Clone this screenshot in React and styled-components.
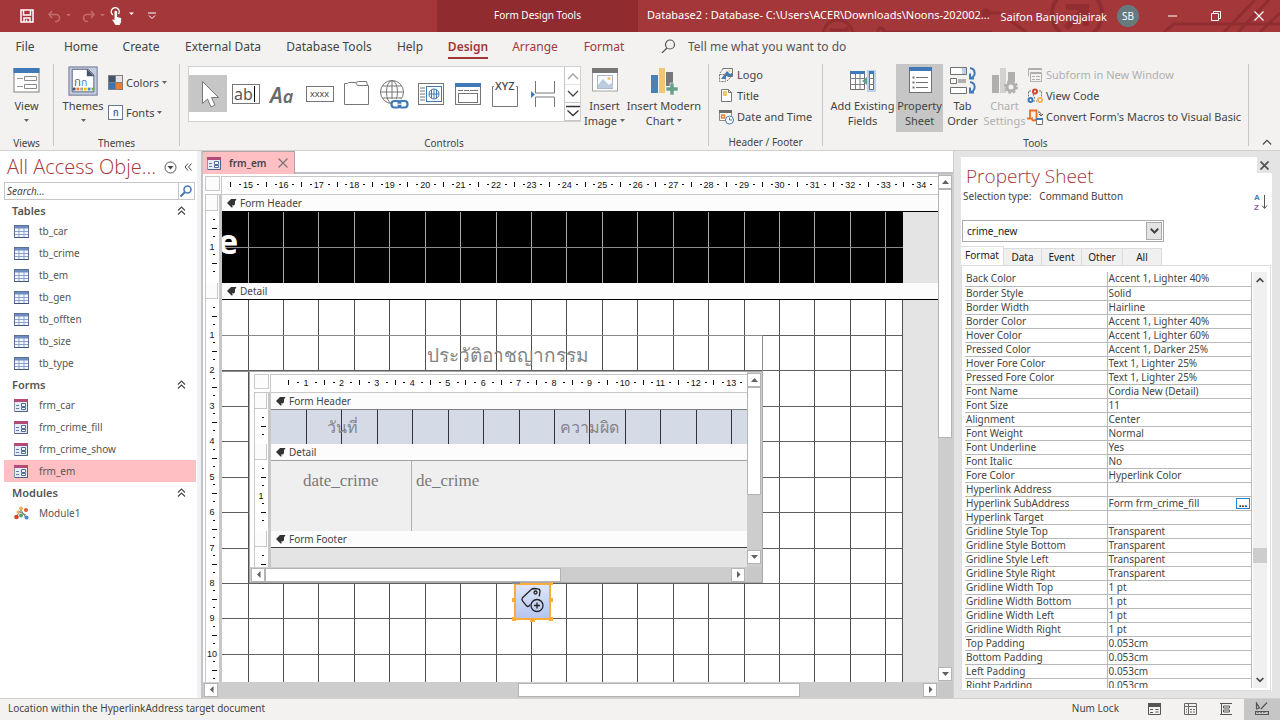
import React from 'react';
import styled, { createGlobalStyle } from 'styled-components';

const GlobalStyle = createGlobalStyle`
    * {
        box-sizing: border-box;
    }
    body {
        margin: 0;
        background: #e4e4e4;
        color: #444444;
        font-family: "Noto Sans", "Open Sans", sans-serif;
        font-size: 10px;
        overflow: hidden;
    }
    button, input, select {
        font: inherit;
        color: inherit;
        margin: 0;
        padding: 0;
        border: 0;
        background: none;
    }
    svg {
        display: block;
        flex: none;
    }
`

const Page = styled.div`
    display: flex;
    flex-direction: column;
    height: 100vh;
`

/* ---------- title bar ---------- */

const TitleBar = styled.header`
    position: relative;
    display: flex;
    flex: none;
    height: 32px;
    background: #a4373a;
    color: #ffffff;
    font-size: 11px;
`
const Circuit = styled.svg`
    position: absolute;
    right: 0;
    top: 0;
`
const QuickAccess = styled.div`
    display: flex;
    align-items: center;
    flex: 0 0 437px;
    padding-left: 20px;
`
const QuickButton = styled.button`
    display: flex;
    align-items: center;
    justify-content: center;
    width: ${p => p.$w}px;
    height: 24px;
    color: ${p => p.$dim ? '#c26b6d' : '#ffffff'};
`
const ToolContext = styled.div`
    display: flex;
    align-items: center;
    justify-content: center;
    flex: 0 0 201px;
    background: #902b2f;
    padding-bottom: 2px;
    font-size: 10px;
`
const DocTitle = styled.div`
    position: relative;
    flex: 1;
    min-width: 0;
    padding-left: 9px;
    line-height: 30px;
    white-space: nowrap;
`
const Account = styled.button`
    position: relative;
    display: flex;
    align-items: center;
    gap: 10px;
    margin-right: 12px;
`
const Avatar = styled.span`
    width: 22px;
    height: 22px;
    border-radius: 50%;
    background: #677a80;
    font-size: 10px;
    line-height: 22px;
`
const WindowButton = styled.button`
    position: relative;
    display: flex;
    align-items: center;
    justify-content: center;
    width: 43px;
`

/* ---------- ribbon ---------- */

const Tabs = styled.nav`
    display: flex;
    flex: none;
    height: 32px;
    background: #f3f2f1;
    font-size: 12px;
`
const Tab = styled.button`
    width: ${p => p.$w}px;
    height: 28px;
    color: ${p => p.$red ? '#a4373a' : '#444444'};
    font-weight: ${p => p.$active ? 600 : 400};
    white-space: nowrap;

    span {
        padding-bottom: 2px;
        border-bottom: ${p => p.$active ? '2px solid #a4373a' : '2px solid transparent'};
    }
`
const TellMe = styled.label`
    display: flex;
    align-items: center;
    height: 28px;
    padding-left: 25px;
    gap: 12px;

    input {
        width: 200px;
        outline: none;
    }
    input::placeholder {
        color: #555555;
        opacity: 1;
    }
`
const Ribbon = styled.div`
    display: flex;
    flex: none;
    height: 87px;
    background: #f3f2f1;
    border-bottom: 1px solid #d2d0ce;
    font-size: 11px;
    line-height: 15px;
`
const Group = styled.section`
    display: flex;
    flex-direction: column;
    flex: 0 0 ${p => p.$w}px;
    height: 82px;
    border-right: 1px solid #c8c6c4;
`
const GroupBody = styled.div`
    display: flex;
    flex: 1;
    padding-left: ${p => p.$pad || 0}px;
`
const GroupName = styled.div`
    height: 15px;
    font-size: 10px;
    line-height: 22px;
    text-align: center;
`
const BigButton = styled.button`
    display: flex;
    flex-direction: column;
    align-items: center;
    width: ${p => p.$w}px;
    height: 68px;
    padding-top: 2px;
    white-space: nowrap;
    color: ${p => p.disabled ? '#b1afad' : '#444444'};
    background: ${p => p.$active ? '#c6c6c6' : 'transparent'};

    > svg {
        margin-bottom: 4px;
        overflow: visible;
    }
`
const Line = styled.span`
    display: flex;
    align-items: center;
    gap: 3px;
    height: 15px;
`
const ButtonColumn = styled.div`
    display: flex;
    flex-direction: column;
    align-items: flex-start;
    gap: ${p => p.$gap || 0}px;
    padding-top: ${p => p.$top || 0}px;
`
const SmallButton = styled.button`
    display: flex;
    align-items: center;
    gap: 3px;
    height: 21px;
    white-space: nowrap;
    color: ${p => p.disabled ? '#b1afad' : '#444444'};
`
const Gallery = styled.div`
    display: flex;
    width: 393px;
    height: 56px;
    margin: 2px 0 0 8px;
    background: #ffffff;
    border: 1px solid #d2d0ce;
`
const GalleryItem = styled.button`
    display: flex;
    align-items: center;
    justify-content: center;
    width: ${p => p.$w || 37}px;
    height: 37px;
    margin-top: 8px;
    background: ${p => p.$active ? '#c6c6c6' : 'transparent'};
`
const GallerySteps = styled.div`
    display: flex;
    flex-direction: column;
    width: 16px;
    margin-left: auto;
    border-left: 1px solid #c6c6c6;
`
const GalleryStep = styled.button`
    display: flex;
    align-items: center;
    justify-content: center;
    flex: 1;
    border-bottom: 1px solid #c6c6c6;
    opacity: ${p => p.disabled ? 0.5 : 1};
`
const Collapse = styled.button`
    margin: auto 8px 4px auto;
`

/* ---------- workspace ---------- */

const Workspace = styled.div`
    display: flex;
    flex: 1;
    min-height: 0;
`
const NavPane = styled.aside`
    flex: 0 0 201px;
    background: #ffffff;
    border-right: 4px solid #f1f1f3;
    padding: 3px 0 0 4px;
`
const NavHead = styled.div`
    display: flex;
    align-items: center;
    height: 26px;
    gap: 7px;

    h1 {
        flex: 1;
        margin: 0;
        padding-left: 3px;
        color: #a4373a;
        font: 300 20px/26px "Open Sans", sans-serif;
        white-space: nowrap;
    }
    button:last-child {
        margin-right: 5px;
    }
`
const SearchBox = styled.div`
    display: flex;
    width: 191px;
    height: 18px;
    margin: 2px 0 2px 0;
    border: 1px solid #c6c6c6;

    input {
        flex: 1;
        min-width: 0;
        padding-left: 2px;
        font-style: italic;
    }
    input::placeholder {
        color: #444444;
        opacity: 1;
    }
    button {
        width: 16px;
        border-left: 1px solid #c6c6c6;
    }
`
const NavGroup = styled.button`
    display: flex;
    align-items: center;
    justify-content: space-between;
    width: 100%;
    height: 17px;
    padding: 0 11px 0 8px;
    color: #555555;
    font-size: 11px;
    font-weight: 600;
`
const NavList = styled.div`
    padding: 1px 1px 2px 0;
`
const NavItem = styled.a`
    display: flex;
    align-items: center;
    gap: 10px;
    height: 22px;
    padding-left: 10px;
    color: #555555;
    text-decoration: none;
    background: ${p => p.$active ? '#ffbfc3' : 'transparent'};
`

const Doc = styled.main`
    display: flex;
    flex-direction: column;
    flex: 1;
    min-width: 0;
    border-left: 2px solid #c4c4c8;
    background: #ffffff;
`
const DocTabs = styled.div`
    display: flex;
    flex: none;
    height: 23px;
    border-bottom: 2px solid #c0bfc6;
`
const DocTab = styled.div`
    display: flex;
    align-items: center;
    width: 92px;
    height: 23px;
    padding: 0 6px 0 4px;
    gap: 7px;
    font-weight: 600;
    background: #ffbfc3;
    border: 1px solid #b5a2a6;
    border-width: 1px 1px 0 0;

    button {
        margin-left: auto;
    }
`
const Designer = styled.div`
    display: grid;
    grid-template-columns: minmax(0, 1fr) 15px;
    grid-template-rows: minmax(0, 1fr) 16px;
    flex: 1;
    min-height: 0;
    background: #c8c8c8;
`
const Surface = styled.div`
    display: flex;
    flex-direction: column;
    overflow: hidden;
    padding: 2px 0 0 ${p => p.$pad}px;
    background: #ffffff;
`
const RulerRow = styled.div`
    display: flex;
    flex: none;
    height: 18px;
`
const Corner = styled.div`
    width: 15px;
    height: 15px;
    margin-right: 1px;
    border: 1px solid #c8c8c8;
    background: #fcfcfc;
`
const HStrip = styled.div`
    flex: 1;
    min-width: 0;
    overflow: hidden;
    border: solid #c8c8c8;
    border-width: 1px 0 0 1px;
`
const Section = styled.section`
    display: flex;
    flex: ${p => p.$grow ? '1' : 'none'};
    min-height: 0;
`
const VStrip = styled.div`
    display: flex;
    flex-direction: column;
    width: 15px;
    overflow: hidden;
    border: solid #c8c8c8;
    border-width: ${p => p.$first ? '1px 1px 0 1px' : '0 1px'};

    i {
        flex: none;
        width: 12px;
        height: 16px;
        border: solid #c8c8c8;
        border-width: 0 1px 1px 0;
        background: #fcfcfc;
    }
    svg {
        flex: 1 1 0;
        min-height: 0;
    }
`
const SectionMain = styled.div`
    display: flex;
    flex-direction: column;
    flex: 1;
    min-width: 0;
    border-left: 2px solid #c8c8c8;
`
const SectionBar = styled.button`
    display: flex;
    align-items: center;
    flex: none;
    gap: 3px;
    height: ${p => p.$first ? 18 : 17}px;
    padding-left: 5px;
    background: #fcfcfc;
    border-top: ${p => p.$first ? '1px solid #c8c8c8' : '0'};
    border-bottom: 1px solid ${p => p.$line || '#000000'};
`
const SectionBody = styled.div`
    position: relative;
    isolation: isolate;
    flex: ${p => p.$h ? '0 0 ' + p.$h + 'px' : '1'};
    min-height: 0;
    overflow: hidden;
    background: ${p => p.$bg || '#e4e4e4'};
`

/* Controls sit where the form's author dropped them on the canvas. */
const Placed = styled.div`
    position: absolute;
    left: ${p => p.$x}px;
    top: ${p => p.$y}px;
    white-space: nowrap;
`
const Backdrop = styled(Placed)`
    z-index: -1;
    width: 681px;
    height: 100%;
    background: ${p => p.$bg};
`
const BigLetter = styled(Placed)`
    color: #ffffff;
    font-size: 34px;
    font-weight: 700;
    line-height: 34px;
`
const Heading = styled(Placed)`
    width: 541px;
    height: 37px;
    border: 1px solid #8a8a8a;
    border-left: 0;
    color: #858585;
    font-size: 19px;
    line-height: 38px;
    padding-left: 205px;
`
const Caption = styled(Placed)`
    color: #858585;
    font-size: 16px;
    line-height: 34px;
`
const Field = styled(Placed)`
    width: ${p => p.$w}px;
    height: 70px;
    padding-left: ${p => p.$inset}px;
    border-right: 1px solid #b0b0b0;
    color: #7a7a7a;
    font: 17px/40px "Liberation Serif", serif;
`
const Subform = styled(Placed)`
    display: grid;
    grid-template-columns: minmax(0, 1fr) 15px;
    grid-template-rows: minmax(0, 1fr) 15px;
    width: 514px;
    height: 212px;
    border: 1px solid #a8a8a8;
    background: #c8c8c8;
`
const CommandButton = styled.button`
    position: absolute;
    left: 290px;
    top: 282px;
`

const HBar = styled.div`
    display: flex;
    align-items: center;
    padding: 1px ${p => p.$end}px 1px 1px;
    background: #cdcdcd;
`
const VBar = styled.div`
    display: flex;
    flex-direction: column;
    padding: 1px 0 ${p => p.$end || 1}px 0;
    background: #cdcdcd;
`
const Arrow = styled.button`
    display: flex;
    align-items: center;
    justify-content: center;
    flex: none;
    width: 14px;
    height: 14px;
    background: #ffffff;
    border: 1px solid #b4b4b4;
`
const Thumb = styled.div`
    flex: ${p => p.$size} 1 0;
    height: ${p => p.$across ? '14px' : 'auto'};
    width: ${p => p.$across ? 'auto' : '14px'};
    background: #ffffff;
    border: 1px solid #b4b4b4;
`
const Gap = styled.div`
    flex: ${p => p.$size} 1 0;
`

/* ---------- property sheet ---------- */

const PropPane = styled.aside`
    position: relative;
    flex: 0 0 327px;
    padding: 6px 8px 7px 7px;
    border-left: 1px solid #d0d0d0;
    background: #e4e4e4;
`
const PaneClose = styled.button`
    position: absolute;
    top: 6px;
    right: 0;
    display: flex;
    align-items: center;
    justify-content: center;
    width: 23px;
    height: 16px;
    padding-right: 8px;
    background: #e4e4e4;
`
const Sheet = styled.div`
    display: flex;
    flex-direction: column;
    height: 100%;
    background: #ffffff;
`
const SheetHead = styled.div`
    display: flex;
    justify-content: space-between;
    height: 63px;
    padding: 7px 3px 0 2px;

    h2 {
        margin: 0;
        padding-left: 3px;
        color: #a4373a;
        font: 300 19px/25px "Open Sans", sans-serif;
    }
    p {
        display: flex;
        gap: 8px;
        margin: 0;
        line-height: 14px;
    }
    button {
        margin-top: 28px;
        height: 20px;
    }
`
const Picker = styled.div`
    position: relative;
    width: 202px;
    margin-left: 1px;

    select {
        appearance: none;
        width: 100%;
        height: 22px;
        padding-left: 4px;
        border: 1px solid #ababab;
        background: #ffffff;
        color: #222222;
    }
    span {
        position: absolute;
        top: 2px;
        right: 2px;
        display: flex;
        align-items: center;
        justify-content: center;
        width: 16px;
        height: 18px;
        border: 1px solid #ababab;
        background: #e4e4e4;
        pointer-events: none;
    }
`
const SheetTabs = styled.div`
    display: flex;
    align-items: flex-end;
    height: 23px;
`
const SheetTab = styled.button`
    width: ${p => p.$w}px;
    height: ${p => p.$active ? 20 : 17}px;
    margin-bottom: ${p => p.$active ? -1 : 0}px;
    padding-bottom: ${p => p.$active ? 3 : 0}px;
    color: #222222;
    background: ${p => p.$active ? '#ffffff' : '#f0f0f0'};
    border: 1px solid #dcdcdc;
    border-width: 1px 1px 0 0;
`
const SheetBody = styled.div`
    display: flex;
    flex: 1;
    min-height: 0;
    margin-right: 1px;
    padding: 6px 3px 2px 3px;
    border: 1px solid #dcdcdc;
`
const TableWrap = styled.div`
    flex: 1;
    overflow: hidden;
`
const PropTable = styled.table`
    width: 100%;
    border-collapse: collapse;
    table-layout: fixed;
    line-height: 13px;

    th, td {
        height: 14px;
        padding: 0 0 0 1px;
        border-bottom: 1px solid #b8b8b8;
        font-weight: 400;
        text-align: left;
        white-space: nowrap;
    }
    th {
        width: 142px;
    }
    td {
        border-left: 1px solid #b8b8b8;
        border-right: 1px solid #b8b8b8;
    }
    td div {
        display: flex;
        align-items: center;
        justify-content: space-between;
        height: 13px;
    }
`
const Builder = styled.button`
    width: 14px;
    height: 11px;
    margin-right: 1px;
    border: 1px solid #1f83d6;
    color: #000000;
    font-size: 10px;
    font-weight: 700;
    line-height: 4px;
`
const SheetScroll = styled.div`
    display: flex;
    flex-direction: column;
    align-items: center;
    width: 14px;
    margin-left: 1px;
    background: #f0f0f0;

    i {
        width: 14px;
        height: 15px;
        background: #cdcdcd;
    }
    button {
        display: flex;
        align-items: center;
        justify-content: center;
        height: 16px;
    }
`

/* ---------- status bar ---------- */

const StatusBar = styled.footer`
    display: flex;
    align-items: stretch;
    flex: none;
    height: 22px;
    padding-left: 8px;
    background: #f3f2f1;
    border-top: 1px solid #d2d0ce;
    line-height: 18px;

    p {
        flex: 1;
        margin: 0;
    }
    span {
        margin-right: 17px;
    }
`
const ViewButton = styled.button`
    display: flex;
    align-items: center;
    justify-content: center;
    width: 36px;
    padding-bottom: 2px;
    background: ${p => p.$active ? '#c6c6c6' : 'transparent'};
`

/* ---------- small drawings ---------- */

const Caret = ({ color = '#666666' }) => (
    <svg width="5" height="3" viewBox="0 0 5 3"><path d="M0 0h5L2.5 3z" fill={color} /></svg>
)
const Chevron = ({ up, w = 12, color = '#444444', bold }) => (
    <svg width={w} height="8" viewBox="0 0 12 8" fill="none" stroke={color} strokeWidth={bold ? 2.6 : 1.3}>
        <path d={up ? 'M1 7l5-5 5 5' : 'M1 1l5 5 5-5'} />
    </svg>
)
const Cross = ({ size = 10, color, w = 1.2 }) => (
    <svg width={size} height={size} viewBox="0 0 10 10" stroke={color} strokeWidth={w}>
        <path d="M.5.5l9 9M9.500 .5l-9 9" />
    </svg>
)
const arrowPaths = { up: 'M0 6l3.500-4L7 6z', down: 'M0 2l3.500 4L7 2z', left: 'M5.500 0v7L2 3.500z', right: 'M2 0v7l3.500-3.500z' }
const ArrowGlyph = ({ dir }) => (
    <svg width="7" height="8" viewBox="0 0 7 8"><path d={arrowPaths[dir]} fill="#606060" /></svg>
)
const DoubleUp = () => (
    <svg width="9" height="9" viewBox="0 0 9 9" fill="none" stroke="#444444" strokeWidth="1.1">
        <path d="M1 4.500L4.500 1 8 4.500M1 8.500L4.500 5 8 8.500" />
    </svg>
)
const SectionArrow = () => (
    <svg width="10" height="10" viewBox="0 0 10 10">
        <path d="M0 5L4 1h5.500L8 3.500V6L6.500 8.500V7H5.500v2.500H4.500z" fill="#333333" />
    </svg>
)
const TableIcon = () => (
    <svg width="15" height="13" viewBox="0 0 15 13">
        <rect x=".5" y=".5" width="14" height="12" fill="#f4f8fd" stroke="#5a7199" />
        <path d="M1 1h13v2.500H1z" fill="#6d8cc0" />
        <path d="M1 6.500h13M1 9.500h13M5 3v9.500M10 3v9.500" stroke="#8ba3c9" />
        <path d="M.5 12.500h14" stroke="#3f5478" />
    </svg>
)
const FormIcon = () => (
    <svg width="15" height="13" viewBox="0 0 15 13">
        <rect x=".5" y=".5" width="13" height="12" fill="#e6edf7" stroke="#8295b5" />
        <path d="M0 0h14v3H0z" fill="#b34a78" />
        <path d="M2 6.500h3M2 9.500h3" stroke="#6580a8" />
        <path d="M7.500 4.500h4v3h-4zM7.500 8.500h4v2h-4z" fill="#ffffff" stroke="#4e6c9c" />
        <path d="M13.500 3v9.500H1" stroke="#4f6184" fill="none" />
    </svg>
)
const ModuleIcon = () => (
    <svg width="15" height="14" viewBox="0 0 15 14">
        <path d="M2 11l5-7 5 8M4 5l8 4" stroke="#777777" fill="none" />
        <circle cx="7" cy="2.500" r="2" fill="#e8b45c" />
        <circle cx="12" cy="4" r="2" fill="#d9582f" />
        <circle cx="2.500" cy="11" r="2.300" fill="#cf4a31" />
        <circle cx="7" cy="9.500" r="2" fill="#57a05b" />
        <circle cx="12.500" cy="11.500" r="2" fill="#4a86d0" />
        <circle cx="4" cy="6" r="1.500" fill="#e8b45c" />
    </svg>
)

const CircuitArt = () => (
    <Circuit width="460" height="32" viewBox="0 0 460 32" fill="none" stroke="#8f2d31" strokeWidth="3">
        <circle cx="18" cy="35" r="15" />
        <path d="M10 30h16M12 35h12" />
        <path d="M28 31l-2-4M62 32h110M156 13h24l26 19" />
        <circle cx="61" cy="31" r="3" />
        <circle cx="166" cy="13" r="3" />
        <circle cx="257" cy="14" r="25" strokeWidth="4" />
        <path d="M246 28l18-18M246 7h20v19" strokeWidth="6" />
        <path d="M344 32l10-8h106M404 32l31-32M418 32l31-32M440 32l20-19" />
    </Circuit>
)

/* ribbon icons */
const ViewIcon = () => (
    <svg width="28" height="28" viewBox="0 0 28 28">
        <rect x="1" y="3" width="25" height="23" fill="#ffffff" stroke="#808080" />
        <path d="M.5 2h26v5h-26z" fill="#3f79b8" />
        <path d="M4 12.500h6M4 20.500h6" stroke="#9a9a9a" />
        <path d="M11.500 10.500h12v4h-12zM11.500 18.500h12v4h-12z" fill="#ffffff" stroke="#8a8a8a" />
    </svg>
)
const ThemesIcon = () => (
    <svg width="30" height="28" viewBox="0 0 30 28">
        <g transform="scale(.94)">
            <rect x="1" y="1" width="30" height="30" fill="#c3cbdc" stroke="#66738f" />
            <path d="M4.500 3.500h17l6 6v18h-23z" fill="#ffffff" stroke="#4f5f80" />
            <path d="M20 3v8h8z" fill="#44546a" />
            <text x="6" y="21" fontSize="12" fill="#44546a">ก</text>
            <text x="14" y="21" fontSize="11" fill="#3f79b8">ก</text>
            {['#44546a', '#ed7d31', '#a5a5a5', '#ffc000', '#4a86d0', '#70ad47'].map((c, i) => (
                <rect key={c} x={5 + i * 4} y="23" width="3" height="3" fill={c} />
            ))}
        </g>
    </svg>
)
const ColorsIcon = () => (
    <svg width="15" height="15" viewBox="0 0 15 15">
        <path d="M0 0h15v15H0z" fill="#7f7f7f" />
        <path d="M1 1h6v6H1z" fill="#44546a" />
        <path d="M8 1h6v6H8z" fill="#e3e3e3" />
        <path d="M1 8h6v6H1z" fill="#3c74b8" />
        <path d="M8 8h6v6H8z" fill="#f07b24" />
    </svg>
)
const FontsIcon = () => (
    <svg width="15" height="15" viewBox="0 0 15 15">
        <rect x=".5" y=".5" width="14" height="14" fill="#ffffff" stroke="#66788f" />
        <text x="5" y="11" fontSize="9" fontWeight="600" fill="#3f5f95">ก</text>
    </svg>
)
const Frame = ({ children, w = 28, h = 28 }) => (
    <svg width={w} height={h} viewBox={'0 0 ' + w + ' ' + h} fill="none" stroke="#767676">{children}</svg>
)
const galleryIcons = [
    ['Select', <Frame><path d="M8.500 1.500v22l5-4.500 3.500 8 4-2-3.500-7.500h7z" fill="#ffffff" /></Frame>],
    ['Text Box', <Frame><rect x=".5" y="4.500" width="27" height="19" fill="#ffffff" /><text x="2" y="20" fontSize="16" fill="#555555" stroke="none">ab</text><path d="M22.500 6v16" stroke="#000000" /></Frame>],
    ['Label', <Frame><text x="1" y="23" fontSize="21" fontStyle="italic" fontWeight="600" fill="#6a6a6a" stroke="none">A<tspan fontSize="18">a</tspan></text></Frame>],
    ['Button', <Frame><rect x=".5" y="6.500" width="27" height="15" fill="#ffffff" /><text x="4" y="17" fontSize="9" fill="#444444" stroke="none">xxxx</text></Frame>],
    ['Tab Control', <Frame><path d="M1.500 24.500v-21h3l1-1h7l2 3h11v19z" fill="#ffffff" /><path d="M12.500 2.500l3-1h8l1 4" /></Frame>],
    ['Link', (
        <Frame w={30} h={30}>
            <circle cx="13" cy="13" r="11.500" />
            <ellipse cx="13" cy="13" rx="5.500" ry="11.500" />
            <path d="M13 1v24M1.500 13h23M3.500 7h19M3.500 19h19" />
            <path d="M12 20h18v10H12z" fill="#ffffff" stroke="none" />
            <g stroke="#3f79b8" strokeWidth="2.200">
                <rect x="12.500" y="22" width="9" height="6.500" rx="3" />
                <rect x="19.500" y="22" width="9" height="6.500" rx="3" />
            </g>
            <path d="M17 25.200h7" stroke="#ffffff" strokeWidth="1" />
        </Frame>
    )],
    ['Web Browser Control', <Frame><rect x="1.500" y="3.500" width="25" height="21" fill="#ffffff" /><path d="M3 8h5M3 11h5M3 14h5M3 17h5M3 20h5" /><rect x="9.500" y="6.500" width="15" height="15" stroke="#3f79b8" /><circle cx="17" cy="14" r="5" stroke="#3f79b8" /><path d="M17 9v10M12 14h10M14.500 10v8M19.500 10v8" stroke="#3f79b8" /></Frame>],
    ['Navigation Control', <Frame><rect x="1.500" y="3.500" width="25" height="21" fill="#ffffff" /><path d="M1 3h26v4H1z" fill="#3f79b8" stroke="none" /><path d="M4 10.500h5M10 10.500h5M16 10.500h8" /><rect x="4.500" y="13.500" width="19" height="9" /></Frame>],
    ['Option Group', <Frame><path d="M3 6.500H1.500v20h25v-20H25" fill="#ffffff" /><text x="4" y="10" fontSize="11" fontWeight="500" fill="#444444" stroke="none">XYZ</text></Frame>],
    ['Insert Page Break', <Frame><path d="M7.500 1v12h19V1M7.500 27V17h19v10" /><path d="M3 11l4 3.500L3 18z" fill="#3f79b8" stroke="none" /></Frame>],
]
const InsertImageIcon = () => (
    <svg width="28" height="28" viewBox="0 0 28 28">
        <rect x="1.500" y="3" width="25" height="22" fill="#ffffff" stroke="#a3a3a3" />
        <path d="M1 2h26v5H1z" fill="#767676" />
        <rect x="6.500" y="9.500" width="15" height="13" fill="#f7f9fc" stroke="#a9b6c6" />
        <path d="M7 22v-3l5-6 6 6 2-2 2 2v3z" fill="#bccbdd" />
        <circle cx="18" cy="12.500" r="1.500" fill="#edc36f" />
    </svg>
)
const ChartIcon = () => (
    <svg width="28" height="28" viewBox="0 0 28 28">
        <path d="M1 9h7v18H1z" fill="#4a80b8" />
        <path d="M9 2h6v25H9z" fill="#f0c674" />
        <path d="M16 6h7v14h-7z" fill="#777777" />
        <path d="M20 17h4v4h4v4h-4v4h-4v-4h-4v-4h4z" fill="#65a08c" stroke="#f3f2f1" strokeWidth=".6" />
    </svg>
)
const LogoIcon = () => (
    <svg width="16" height="16" viewBox="0 0 16 16" fill="none">
        <path d="M4.500 1.500h10v8h-5" stroke="#777777" /><path d="M3 12l3-4h2v4z" fill="#3f79b8" />
        <path d="M6 8l3-4 3 3 2-1v3H6z" fill="#3f79b8" /><circle cx="11.500" cy="4" r="1" fill="#edc36f" />
        <path d="M1.500 7.500h6v7h-6zM2 6l3-4M9 14l4-4" stroke="#777777" strokeDasharray="2 1" />
    </svg>
)
const TitleIcon = () => (
    <svg width="16" height="16" viewBox="0 0 16 16">
        <path d="M3.500 1.500h7l3 3v9h-10z" fill="#ffffff" stroke="#777777" />
        <path d="M10.500 1.500v3h3" stroke="#777777" fill="none" /><path d="M5 3h4v5H5z" fill="#f0c674" />
    </svg>
)
const DateIcon = () => (
    <svg width="16" height="16" viewBox="0 0 16 16" fill="none">
        <path d="M1.500 2.500h12v9h-12z" fill="#ffffff" stroke="#8a8a8a" /><path d="M1 1h13v3H1z" fill="#6c6c6c" />
        <path d="M3.500 6h3v3h-3z" stroke="#ed7d31" strokeWidth="1.500" />
        <circle cx="11.500" cy="11" r="4" fill="#ffffff" stroke="#3f79b8" /><path d="M11.500 8.500V11H14" stroke="#3f79b8" />
    </svg>
)
const FieldsIcon = () => (
    <svg width="28" height="28" viewBox="0 0 28 28" fill="none">
        <path d="M18 4h9v22h-9z" fill="#bcd2ea" />
        <path d="M1.500 6.500h14v17h-14zM20.500 6.500h4v17h-4z" fill="#ffffff" stroke="#707070" />
        <path d="M1 5h15v3H1zM20 5h5v3h-5z" fill="#3f79b8" />
        <path d="M1 12.500h14M1 18.500h14M6.500 8v15M11 8v15M20 12.500h5M20 18.500h5" stroke="#808080" />
        <path d="M13 15l5-4v8z" fill="#65a08c" />
    </svg>
)
const SheetIcon = () => (
    <svg width="28" height="28" viewBox="0 0 28 28" fill="none" stroke="#707070">
        <rect x="3.500" y="2.500" width="22" height="24" fill="#ffffff" />
        <path d="M3 1h23v4H3z" fill="#3f79b8" stroke="none" />
        <path d="M10 11.500h12M10 16.500h12M10 21.500h12" /><path d="M6.500 11.500h2M6.500 16.500h2M6.500 21.500h2" strokeWidth="2" />
    </svg>
)
const OrderIcon = () => (
    <svg width="28" height="28" viewBox="0 0 28 28" fill="none" stroke="#707070">
        <path d="M1.500 1.500h16v7h-16zM1.500 12.500h6v5h-6zM1.500 21.500h16v6h-16z" fill="#ffffff" />
        <path d="M13 2h4v6h-4z" fill="#bcd2ea" stroke="none" /><path d="M9 13h8v4H9z" fill="#b0b0b0" stroke="none" />
        <path d="M21 2c6 1 6 8 1 10M25 12.500h-4V7.500M21 16c6 1 6 8 1 10M25 26.500h-4v-5" stroke="#3f79b8" strokeWidth="2" />
    </svg>
)
const ChartSettingsIcon = () => (
    <svg width="28" height="28" viewBox="0 0 28 28">
        <path d="M1 9h7v18H1zM17 6h7v10h-7z" fill="#b1afad" /><path d="M9 2h6v25H9z" fill="#d4d2d0" />
        <circle cx="20" cy="21" r="4" fill="#f3f2f1" stroke="#b1afad" strokeWidth="3" />
        <circle cx="20" cy="21" r="6" fill="none" stroke="#b1afad" strokeWidth="2" strokeDasharray="2.400 2.310" />
    </svg>
)
const SubformIcon = () => (
    <svg width="16" height="16" viewBox="0 0 16 16" fill="none" stroke="#b1afad">
        <path d="M1.500 9.500v-8h13v2M1 2.500h13" /><path d="M3.500 5.500h11v9h-11zM3 6.500h12M5 9.500h3M9 9.500h4M5 12.500h3M9 12.500h4" />
    </svg>
)
const CodeIcon = () => (
    <svg width="16" height="16" viewBox="0 0 16 16" fill="none">
        <path d="M4 3H1.500v6M12 3h2.500v6M6 13h4M6 6l2 5" stroke="#777777" strokeDasharray="2 1" />
        <circle cx="8" cy="3.500" r="2" stroke="#c8492c" strokeWidth="2" fill="#ffffff" />
        <circle cx="3.500" cy="12" r="2" stroke="#3f79b8" strokeWidth="2" fill="#ffffff" />
        <circle cx="13" cy="12" r="2" stroke="#edb45c" strokeWidth="2" fill="#ffffff" />
    </svg>
)
const ConvertIcon = () => (
    <svg width="16" height="16" viewBox="0 0 16 16" fill="none">
        <path d="M3 9V1.500h6.500V9M0 9.500h5a2 2 0 0 0 4 0" stroke="#ed7024" strokeWidth="1.800" />
        <path d="M11 3c3 0 3 2 3 4M12 5l2 2 2-2" stroke="#555555" />
        <path d="M9.500 9.500h6v6h-6z" fill="#ffffff" stroke="#777777" /><path d="M9 9h7v2H9z" fill="#3f79b8" />
    </svg>
)

const UNIT = 35.43

function HRuler({ origin, first, count }) {
    const marks = []
    for (let i = 0; i < count; i++) {
        const x = origin + i * UNIT
        marks.push(
            <g key={i}>
                <rect x={Math.round(x - UNIT * 0.5)} y="5" width="1" height="5" />
                <rect x={Math.round(x - UNIT * 0.25)} y="7" width="2" height="1" />
                <rect x={Math.round(x + UNIT * 0.25)} y="7" width="2" height="1" />
                <text x={x} y="11" textAnchor="middle">{first + i}</text>
            </g>
        )
    }
    return (
        <svg width="100%" height="16" fontSize="9" fontFamily="Liberation Sans, sans-serif" fill="#111111">
            {marks}
        </svg>
    )
}

function VRuler({ count, last }) {
    const marks = []
    for (let i = 0; i < count; i++) {
        const y = i * UNIT
        marks.push(
            <g key={i}>
                <rect x="7" y={Math.round(y + 8)} width="2" height="1" />
                <rect x="6" y={Math.round(y + 17)} width="5" height="1" />
                <rect x="7" y={Math.round(y + 25)} width="2" height="1" />
                {(i < count - 1 || last) && <text x="6" y={Math.round(y + 39)} textAnchor="middle">{i + 1}</text>}
            </g>
        )
    }
    return (
        <svg width="13" height="1" fontSize="9" fontFamily="Liberation Sans, sans-serif" fill="#111111">
            {marks}
        </svg>
    )
}

function Grid({ width, height, offset = 0, color, cross, rows = 0, edge }) {
    const lines = []
    for (let x = offset; x < width; x += UNIT) {
        lines.push(<path key={'c' + x} d={`M${Math.floor(x) + 0.5} 0V${height}`} />)
    }
    for (let i = 1; i <= rows; i++) {
        lines.push(<path key={'r' + i} stroke={cross} d={`M0 ${Math.floor(i * UNIT) + 0.5}H${width}`} />)
    }
    return (
        <svg width={width} height={height} stroke={color} fill="none">
            {lines}
            {edge && <path d={`M${width - 0.5} 0V${height}`} />}
        </svg>
    )
}

function HScroll({ before, size, after, end = 1 }) {
    return (
        <HBar $end={end}>
            <Arrow aria-label="Scroll left"><ArrowGlyph dir="left" /></Arrow>
            {before > 0 && <Gap $size={before} />}
            <Thumb $across $size={size} />
            <Gap $size={after} />
            <Arrow aria-label="Scroll right"><ArrowGlyph dir="right" /></Arrow>
        </HBar>
    )
}

function VScroll({ size, after, end }) {
    return (
        <VBar $end={end}>
            <Arrow aria-label="Scroll up"><ArrowGlyph dir="up" /></Arrow>
            <Thumb $size={size} />
            <Gap $size={after} />
            <Arrow aria-label="Scroll down"><ArrowGlyph dir="down" /></Arrow>
        </VBar>
    )
}

function FormSection({ name, first, grow, h, bg, line, marks, lastMark, children }) {
    return (
        <Section $grow={grow}>
            <VStrip $first={first}>
                <i />
                <VRuler count={marks} last={lastMark} />
            </VStrip>
            <SectionMain>
                <SectionBar $first={first} $line={line}><SectionArrow />{name}</SectionBar>
                <SectionBody $h={h} $bg={bg}>{children}</SectionBody>
            </SectionMain>
        </Section>
    )
}

function CrimeSubform() {
    return (
        <Subform $x={27} $y={71}>
            <Surface $pad={4}>
                <RulerRow>
                    <Corner />
                    <HStrip><HRuler origin={35} first={1} count={13} /></HStrip>
                </RulerRow>
                <FormSection name="Form Header" first h={34} bg="#d5dbe6" line="#808080" marks={1}>
                    <Grid width={480} height={34} offset={UNIT} color="#30343c" />
                    <Caption $x={56} $y={0}>วันที่</Caption>
                    <Caption $x={289} $y={0}>ความผิด</Caption>
                </FormSection>
                <FormSection name="Detail" h={70} bg="#efefef" line="#a0a0a0" marks={2}>
                    <Field $x={0} $y={0} $w={141} $inset={32}>date_crime</Field>
                    <Field $x={141} $y={0} $w={400} $inset={4}>de_crime</Field>
                </FormSection>
                <FormSection name="Form Footer" grow line="#404040" marks={1} />
            </Surface>
            <VScroll size={108} after={56} end={3} />
            <HScroll before={0} size={295} after={170} end={2} />
        </Subform>
    )
}

function FormDesigner() {
    return (
        <Designer>
            <Surface $pad={2}>
                <RulerRow>
                    <Corner />
                    <HStrip><HRuler origin={26} first={15} count={20} /></HStrip>
                </RulerRow>
                <FormSection name="Form Header" first h={71} marks={2}>
                    <Backdrop $x={0} $y={0} $bg="#000000" />
                    <Grid width={681} height={71} offset={26} color="#a8a8a8" cross="#8a8a8a" rows={1} />
                    <BigLetter $x={-4} $y={12}>e</BigLetter>
                </FormSection>
                <FormSection name="Detail" grow marks={11}>
                    <Backdrop $x={0} $y={0} $bg="#ffffff" />
                    <Grid width={681} height={420} offset={26} color="#505050" cross="#606060" rows={10} edge />
                    <Heading $x={0} $y={35}>ประวัติอาชญากรรม</Heading>
                    <CrimeSubform />
                    <CommandButton aria-label="crime_new">
                        <svg width="42" height="40" viewBox="0 0 42 40" fill="none">
                            <defs>
                                <linearGradient id="face" x1="0" y1="0" x2="0" y2="1">
                                    <stop offset="0" stopColor="#dfe7f9" />
                                    <stop offset="1" stopColor="#b4c4f0" />
                                </linearGradient>
                            </defs>
                            <rect x="3" y="2" width="35" height="35" fill="url(#face)" stroke="#ffab3c" strokeWidth="2" />
                            <path d="M0 16h4v4H0zM37 16h4v4h-4zM0 35h4v4H0zM37 35h4v4h-4zM18 36h5v4h-5zM38 0h3v3h-3z" fill="#ffab3c" />
                            <path d="M-1 0h9v2h-9z" fill="#858b93" />
                            <path d="M18 22.500l-1 1.500c-1 .8-1.700.6-2.500-.2l-4-5c-.8-1-.8-2 0-3l8.500-8c1-1 2-1.300 3.500-1.300l3.500.3c1.500 0 2 1 2 2.500l-.8 5" stroke="#222222" strokeWidth="1.300" />
                            <circle cx="23.500" cy="10.500" r="1.500" stroke="#222222" strokeWidth="1.300" />
                            <circle cx="25" cy="23.500" r="6" stroke="#222222" strokeWidth="1.300" />
                            <path d="M25 20.500v6M22 23.500h6" stroke="#222222" strokeWidth="1.300" />
                        </svg>
                    </CommandButton>
                </FormSection>
            </Surface>
            <VScroll size={248} after={229} />
            <HScroll before={301} size={281} after={124} />
        </Designer>
    )
}

const tables = ['tb_car', 'tb_crime', 'tb_em', 'tb_gen', 'tb_offten', 'tb_size', 'tb_type']
const forms = ['frm_car', 'frm_crime_fill', 'frm_crime_show', 'frm_em']
const tabs = [
    ['File', 50], ['Home', 62], ['Create', 58], ['External Data', 106], ['Database Tools', 106], ['Help', 56],
    ['Design', 60], ['Arrange', 74], ['Format', 64],
]
const properties = [
    ['Back Color', 'Accent 1, Lighter 40%'],
    ['Border Style', 'Solid'],
    ['Border Width', 'Hairline'],
    ['Border Color', 'Accent 1, Lighter 40%'],
    ['Hover Color', 'Accent 1, Lighter 60%'],
    ['Pressed Color', 'Accent 1, Darker 25%'],
    ['Hover Fore Color', 'Text 1, Lighter 25%'],
    ['Pressed Fore Color', 'Text 1, Lighter 25%'],
    ['Font Name', 'Cordia New (Detail)'],
    ['Font Size', '11'],
    ['Alignment', 'Center'],
    ['Font Weight', 'Normal'],
    ['Font Underline', 'Yes'],
    ['Font Italic', 'No'],
    ['Fore Color', 'Hyperlink Color'],
    ['Hyperlink Address', ''],
    ['Hyperlink SubAddress', 'Form frm_crime_fill'],
    ['Hyperlink Target', ''],
    ['Gridline Style Top', 'Transparent'],
    ['Gridline Style Bottom', 'Transparent'],
    ['Gridline Style Left', 'Transparent'],
    ['Gridline Style Right', 'Transparent'],
    ['Gridline Width Top', '1 pt'],
    ['Gridline Width Bottom', '1 pt'],
    ['Gridline Width Left', '1 pt'],
    ['Gridline Width Right', '1 pt'],
    ['Top Padding', '0.053cm'],
    ['Bottom Padding', '0.053cm'],
    ['Left Padding', '0.053cm'],
    ['Right Padding', '0.053cm'],
]

function TopBar() {
    return (
        <TitleBar>
            <CircuitArt />
            <QuickAccess>
                <QuickButton $w={14} aria-label="Save">
                    <svg width="14" height="14" viewBox="0 0 14 14" fill="none" stroke="currentColor" strokeWidth="1.500">
                        <path d="M1 1h12v12H1zM3.500 1v5h7V1M4 13V9h6v4M6.500 10.500v2.500" />
                    </svg>
                </QuickButton>
                <QuickButton $w={50} $dim aria-label="Undo">
                    <svg width="24" height="14" viewBox="0 0 24 14" fill="none" stroke="currentColor" strokeWidth="1.600">
                        <path d="M5 2L2 5.500 5 9M2 5.500h7a3.500 3.500 0 0 1 0 7H8" />
                        <path d="M19 5h5l-2.500 2.500z" fill="currentColor" stroke="none" />
                    </svg>
                </QuickButton>
                <QuickButton $w={18} $dim aria-label="Redo">
                    <svg width="24" height="14" viewBox="0 0 24 14" fill="none" stroke="currentColor" strokeWidth="1.600">
                        <path d="M10 2l3 3.500L10 9M13 5.500H6a3.500 3.500 0 0 0 0 7h1" />
                        <path d="M19 5h5l-2.500 2.500z" fill="currentColor" stroke="none" />
                    </svg>
                </QuickButton>
                <QuickButton $w={40} aria-label="Touch mode">
                    <svg width="25" height="18" viewBox="0 0 25 18" fill="none" stroke="currentColor">
                        <path d="M3 8a4 4 0 1 1 5.500-1" strokeWidth="1.300" />
                        <path d="M4.500 5a1.300 1.300 0 0 1 2.600 0v5l4 1v4l-1.500 3H5.500L2 12.500l2.500.5z" fill="currentColor" stroke="none" />
                        <path d="M19 5.500h5L21.500 8z" fill="currentColor" stroke="none" />
                    </svg>
                </QuickButton>
                <QuickButton $w={20} aria-label="Customize quick access">
                    <svg width="8" height="8" viewBox="0 0 8 8" fill="none" stroke="currentColor">
                        <path d="M0 1h8M1 3.500l3 3 3-3" />
                    </svg>
                </QuickButton>
            </QuickAccess>
            <ToolContext>Form Design Tools</ToolContext>
            <DocTitle>Database2 : Database- C:\Users\ACER\Downloads\Noons-202002...</DocTitle>
            <Account>Saifon Banjongjairak<Avatar>SB</Avatar></Account>
            <WindowButton aria-label="Minimize">
                <svg width="9" height="2"><path d="M0 1h9" stroke="#ffffff" /></svg>
            </WindowButton>
            <WindowButton aria-label="Restore">
                <svg width="10" height="10" viewBox="0 0 10 10" fill="none" stroke="#ffffff">
                    <path d="M.5 2.500h7v7h-7zM2.500 2.500v-2h7v7h-2" />
                </svg>
            </WindowButton>
            <WindowButton aria-label="Close"><Cross color="#ffffff" size={10} /></WindowButton>
        </TitleBar>
    )
}

function RibbonTabs() {
    return (
        <Tabs>
            {tabs.map(([name, w], i) => (
                <Tab key={name} $w={w} $red={i > 5} $active={name === 'Design'}><span>{name}</span></Tab>
            ))}
            <TellMe>
                <svg width="15" height="14" viewBox="0 0 15 14" fill="none" stroke="#555555" strokeWidth="1.200">
                    <circle cx="9" cy="5.500" r="4.500" /><path d="M6 9l-5 5" />
                </svg>
                <input placeholder="Tell me what you want to do" aria-label="Tell me what you want to do" />
            </TellMe>
        </Tabs>
    )
}

function RibbonBar() {
    return (
        <Ribbon>
            <Group $w={54}>
                <GroupBody>
                    <BigButton $w={53}><ViewIcon /><Line>View</Line><Line><Caret /></Line></BigButton>
                </GroupBody>
                <GroupName>Views</GroupName>
            </Group>
            <Group $w={126}>
                <GroupBody $pad={4}>
                    <BigButton $w={50}><ThemesIcon /><Line>Themes</Line><Line><Caret /></Line></BigButton>
                    <ButtonColumn $gap={9} $top={8}>
                        <SmallButton><ColorsIcon />Colors <Caret /></SmallButton>
                        <SmallButton><FontsIcon />Fonts <Caret /></SmallButton>
                    </ButtonColumn>
                </GroupBody>
                <GroupName>Themes</GroupName>
            </Group>
            <Group $w={529}>
                <GroupBody>
                    <Gallery>
                        {galleryIcons.map(([name, icon], i) => (
                            <GalleryItem key={name} $active={i === 0} $w={i === 0 ? 38 : 37} aria-label={name}>{icon}</GalleryItem>
                        ))}
                        <GallerySteps>
                            <GalleryStep disabled aria-label="Previous row"><Chevron up /></GalleryStep>
                            <GalleryStep aria-label="Next row"><Chevron /></GalleryStep>
                            <GalleryStep aria-label="More controls">
                                <svg width="14" height="13" viewBox="0 0 14 13" fill="none" stroke="#333333">
                                    <path d="M0 1.500h14" strokeWidth="1.500" /><path d="M1.500 5.500l5.500 5 5.500-5" strokeWidth="1.300" />
                                </svg>
                            </GalleryStep>
                        </GallerySteps>
                    </Gallery>
                    <BigButton $w={47}><InsertImageIcon /><Line>Insert</Line><Line>Image <Caret /></Line></BigButton>
                    <BigButton $w={72}><ChartIcon /><Line>Insert Modern</Line><Line>Chart <Caret /></Line></BigButton>
                </GroupBody>
                <GroupName>Controls</GroupName>
            </Group>
            <Group $w={114}>
                <GroupBody $pad={9}>
                    <ButtonColumn>
                        <SmallButton><LogoIcon />Logo</SmallButton>
                        <SmallButton><TitleIcon />Title</SmallButton>
                        <SmallButton><DateIcon />Date and Time</SmallButton>
                    </ButtonColumn>
                </GroupBody>
                <GroupName>Header / Footer</GroupName>
            </Group>
            <Group $w={426}>
                <GroupBody $pad={6}>
                    <BigButton $w={67}><FieldsIcon /><Line>Add Existing</Line><Line>Fields</Line></BigButton>
                    <BigButton $w={47} $active><SheetIcon /><Line>Property</Line><Line>Sheet</Line></BigButton>
                    <BigButton $w={39}><OrderIcon /><Line>Tab</Line><Line>Order</Line></BigButton>
                    <BigButton $w={45} disabled><ChartSettingsIcon /><Line>Chart</Line><Line>Settings</Line></BigButton>
                    <ButtonColumn>
                        <SmallButton disabled><SubformIcon />Subform in New Window</SmallButton>
                        <SmallButton><CodeIcon />View Code</SmallButton>
                        <SmallButton><ConvertIcon />Convert Form's Macros to Visual Basic</SmallButton>
                    </ButtonColumn>
                </GroupBody>
                <GroupName>Tools</GroupName>
            </Group>
            <Collapse aria-label="Collapse the ribbon"><Chevron up w={10} /></Collapse>
        </Ribbon>
    )
}

function Navigation() {
    return (
        <NavPane>
            <NavHead>
                <h1>All Access Obje...</h1>
                <button aria-label="Filter objects">
                    <svg width="13" height="13" viewBox="0 0 13 13" fill="none" stroke="#555555">
                        <circle cx="6.500" cy="6.500" r="5.500" /><path d="M3.500 5h6l-3 3.500z" fill="#444444" stroke="none" />
                    </svg>
                </button>
                <button aria-label="Close pane">
                    <svg width="8" height="8" viewBox="0 0 8 8" fill="none" stroke="#444444"><path d="M4 .5L1 4l3 3.500M7.500 .5L4.500 4l3 3.500" /></svg>
                </button>
            </NavHead>
            <SearchBox>
                <input placeholder="Search..." aria-label="Search objects" />
                <button aria-label="Search">
                    <svg width="14" height="14" viewBox="0 0 14 14" fill="none" stroke="#4a7ab5" strokeWidth="1.600">
                        <circle cx="8.500" cy="5.500" r="3.500" /><path d="M6 8l-4.500 4.500" strokeWidth="2.200" />
                    </svg>
                </button>
            </SearchBox>
            <NavGroup>Tables<DoubleUp /></NavGroup>
            <NavList>
                {tables.map(t => <NavItem key={t} href="#"><TableIcon />{t}</NavItem>)}
            </NavList>
            <NavGroup>Forms<DoubleUp /></NavGroup>
            <NavList>
                {forms.map(f => <NavItem key={f} href="#" $active={f === 'frm_em'}><FormIcon />{f}</NavItem>)}
            </NavList>
            <NavGroup>Modules<DoubleUp /></NavGroup>
            <NavList>
                <NavItem href="#"><ModuleIcon />Module1</NavItem>
            </NavList>
        </NavPane>
    )
}

function PropertySheet() {
    return (
        <PropPane>
            <Sheet>
                <SheetHead>
                    <div>
                        <h2>Property Sheet</h2>
                        <p><span>Selection type:</span><span>Command Button</span></p>
                    </div>
                    <button aria-label="Sort">
                        <svg width="16" height="20" viewBox="0 0 16 20" fontFamily="Liberation Sans, sans-serif" fontWeight="700" fontSize="8">
                            <text x="1" y="8" fill="#3f79b8">A</text>
                            <text x="1" y="18" fill="#8a5fa8">Z</text>
                            <path d="M11.500 3v13M9 13.500l2.500 3 2.500-3" fill="none" stroke="#555555" />
                        </svg>
                    </button>
                </SheetHead>
                <Picker>
                    <select aria-label="Selected object" defaultValue="crime_new"><option>crime_new</option></select>
                    <span><Chevron w={9} bold /></span>
                </Picker>
                <SheetTabs>
                    <SheetTab $w={43} $active>Format</SheetTab>
                    <SheetTab $w={38}>Data</SheetTab>
                    <SheetTab $w={40}>Event</SheetTab>
                    <SheetTab $w={41}>Other</SheetTab>
                    <SheetTab $w={39}>All</SheetTab>
                </SheetTabs>
                <SheetBody>
                    <TableWrap>
                        <PropTable>
                            <tbody>
                                {properties.map(([name, value]) => (
                                    <tr key={name}>
                                        <th scope="row">{name}</th>
                                        <td>
                                            <div>{value}{name === 'Hyperlink SubAddress' && <Builder aria-label="Build">...</Builder>}</div>
                                        </td>
                                    </tr>
                                ))}
                            </tbody>
                        </PropTable>
                    </TableWrap>
                    <SheetScroll>
                        <button aria-label="Scroll up"><Chevron up w={8} bold /></button>
                        <Gap $size={261} />
                        <i />
                        <Gap $size={109} />
                        <button aria-label="Scroll down"><Chevron w={8} bold /></button>
                    </SheetScroll>
                </SheetBody>
            </Sheet>
            <PaneClose aria-label="Close property sheet"><Cross color="#555555" size={9} w={2} /></PaneClose>
        </PropPane>
    )
}

function Status() {
    return (
        <StatusBar>
            <p>Location within the HyperlinkAddress target document</p>
            <span>Num Lock</span>
            <ViewButton aria-label="Form View">
                <svg width="13" height="12" viewBox="0 0 13 12" fill="none" stroke="#555555"><path d="M.5 .5h12v11H.5zM2 6.500h3M2 9.500h3M7.500 6.500h3M7.500 9h3" /><path d="M0 0h13v4H0z" fill="#555555" stroke="none" /></svg>
            </ViewButton>
            <ViewButton aria-label="Datasheet View">
                <svg width="13" height="12" viewBox="0 0 13 12" fill="none" stroke="#666666"><path d="M.5 .5h12v11H.5zM1 3.500h12M4.500 1v10M6 6.500h2M9 6.500h2M6 9h2M9 9h2M2 6.500h1M2 9h1" /></svg>
            </ViewButton>
            <ViewButton aria-label="Layout View">
                <svg width="12" height="12" viewBox="0 0 12 12" fill="none" stroke="#555555"><path d="M0 .5h12M0 11.500h12M1.500 1v10M3.500 3h6v2h-6zM3.500 7h6v2h-6z" /></svg>
            </ViewButton>
            <ViewButton $active aria-label="Design View">
                <svg width="14" height="13" viewBox="0 0 14 13" fill="none" stroke="#555555"><path d="M1.500 1v6l3-1zM6 7l6-6.500M.5 9.500h13v3H.5zM3 10v1M6 10v1M9 10v1" strokeWidth="1.200" /></svg>
            </ViewButton>
        </StatusBar>
    )
}

export default function App() {
    return (
        <Page>
            <GlobalStyle />
            <TopBar />
            <RibbonTabs />
            <RibbonBar />
            <Workspace>
                <Navigation />
                <Doc>
                    <DocTabs>
                        <DocTab><FormIcon />frm_em<button aria-label="Close tab"><Cross color="#777777" /></button></DocTab>
                    </DocTabs>
                    <FormDesigner />
                </Doc>
                <PropertySheet />
            </Workspace>
            <Status />
        </Page>
    )
}
